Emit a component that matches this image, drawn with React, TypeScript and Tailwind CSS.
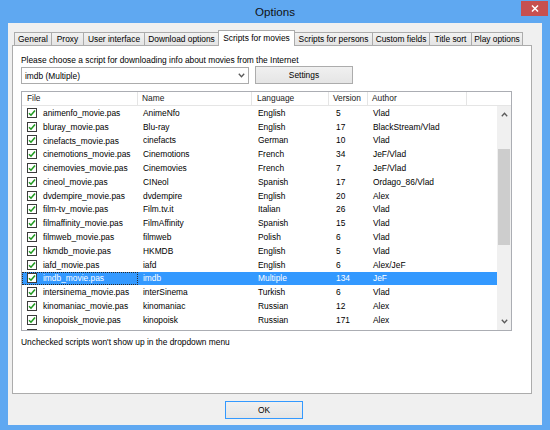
import React from "react";

const tabs: [string, number][] = [
  ["General", 38],
  ["Proxy", 33],
  ["User interface", 62],
  ["Download options", 75],
  ["Scripts for movies", 77],
  ["Scripts for persons", 79],
  ["Custom fields", 58],
  ["Title sort", 43],
  ["Play options", 52],
];

const rows: string[][] = [
  ["animenfo_movie.pas", "AnimeNfo", "English", "5", "Vlad"],
  ["bluray_movie.pas", "Blu-ray", "English", "17", "BlackStream/Vlad"],
  ["cinefacts_movie.pas", "cinefacts", "German", "10", "Vlad"],
  ["cinemotions_movie.pas", "Cinemotions", "French", "34", "JeF/Vlad"],
  ["cinemovies_movie.pas", "Cinemovies", "French", "7", "JeF/Vlad"],
  ["cineol_movie.pas", "CINeol", "Spanish", "17", "Ordago_86/Vlad"],
  ["dvdempire_movie.pas", "dvdempire", "English", "20", "Alex"],
  ["film-tv_movie.pas", "Film.tv.it", "Italian", "26", "Vlad"],
  ["filmaffinity_movie.pas", "FilmAffinity", "Spanish", "15", "Vlad"],
  ["filmweb_movie.pas", "filmweb", "Polish", "6", "Vlad"],
  ["hkmdb_movie.pas", "HKMDB", "English", "5", "Vlad"],
  ["iafd_movie.pas", "iafd", "English", "6", "Alex/JeF"],
  ["imdb_movie.pas", "imdb", "Multiple", "134", "JeF"],
  ["intersinema_movie.pas", "interSinema", "Turkish", "6", "Vlad"],
  ["kinomaniac_movie.pas", "kinomaniac", "Russian", "12", "Alex"],
  ["kinopoisk_movie.pas", "kinopoisk", "Russian", "171", "Alex"],
  ["", "", "", "", ""],
];

const Check = () => (
  <span className="w-[10px] h-[10px] border border-[#3c3c3c] bg-white flex items-center justify-center shrink-0">
    <svg width="8" height="8" viewBox="0 0 8 8">
      <path d="M1 4.2 L3 6.2 L7 1.6" stroke="#1f9a1f" strokeWidth="1.6" fill="none" />
    </svg>
  </span>
);

const Chevron = ({ up }: { up?: boolean }) => (
  <svg width="7" height="5" viewBox="0 0 7 5">
    <path
      d={up ? "M0.8 4.2 L3.5 1.2 L6.2 4.2" : "M0.8 0.8 L3.5 3.8 L6.2 0.8"}
      stroke="#5a5a5a"
      strokeWidth="1.3"
      fill="none"
    />
  </svg>
);

export default function App() {
  const selected = 12;

  return (
    <div className="w-[550px] h-[430px] bg-[#5fa8f1] flex flex-col relative font-['Liberation_Sans',Arial,sans-serif] text-[8.4px] leading-[12px] text-black overflow-hidden">
      {/* title bar */}
      <div className="h-[23px] flex items-center justify-center text-[11.6px] text-[#111]">Options</div>
      <div className="absolute right-[2px] top-[1px] w-[27px] h-[15px] bg-[#c75050] flex items-center justify-center">
        <svg width="8" height="7" viewBox="0 0 8 7">
          <path d="M1 0.5 L7 6.5 M7 0.5 L1 6.5" stroke="#fff" strokeWidth="1.5" />
        </svg>
      </div>

      <div className="mx-[8px] h-[402px] bg-[#f0f0f0] pl-[4px] pt-[7px] flex flex-col">
        {/* tabs */}
        <div className="h-[15px] ml-[2px] flex items-end">
          {tabs.map(([label, w]) => {
            const active = label === "Scripts for movies";
            return (
              <div
                key={label}
                style={{ width: w }}
                className={
                  active
                    ? "h-[16px] -mb-px mr-[-1px] relative z-10 bg-white border border-b-0 border-[#acacac] flex items-start pt-[1px] justify-center whitespace-nowrap"
                    : "h-[13px] mr-[-1px] bg-gradient-to-b from-[#f2f2f2] to-[#e4e4e4] border border-b-0 border-[#acacac] flex items-center justify-center whitespace-nowrap"
                }
              >
                {label}
              </div>
            );
          })}
        </div>

        {/* panel */}
        <div className="w-[520px] h-[349px] bg-white border border-[#acacac] pl-[8px] pt-[8px] flex flex-col">
          <div>Please choose a script for downloading info about movies from the Internet</div>
          <div className="flex items-start">
            <div className="mt-[1px] w-[228px] h-[17px] border border-[#acacac] bg-white flex items-center justify-between pl-[3px] pr-[3px]">
              <span>imdb (Multiple)</span>
              <Chevron />
            </div>
            <button className="ml-[6px] w-[98px] h-[18px] border border-[#acacac] bg-gradient-to-b from-[#f0f0f0] to-[#e5e5e5] flex items-center justify-center">
              Settings
            </button>
          </div>

          {/* list view */}
          <div className="mt-[7px] w-[491px] h-[240px] border border-[#abadb3] flex flex-col">
            <div className="h-[14px] border-b border-[#e5e5e5] flex text-[#1a1a1a]">
              <div className="w-[116px] border-r border-[#e5e5e5] pl-[5px]">File</div>
              <div className="w-[114px] border-r border-[#e5e5e5] pl-[4px]">Name</div>
              <div className="w-[77px] border-r border-[#e5e5e5] pl-[5px]">Language</div>
              <div className="w-[39px] border-r border-[#e5e5e5] pl-[4px]">Version</div>
              <div className="w-[99px] border-r border-[#e5e5e5] pl-[4px]">Author</div>
              <div className="flex-1" />
            </div>
            <div className="flex h-[224px]">
              <div className="w-[475px] overflow-hidden">
                {rows.map((r, i) => {
                  const sel = i === selected;
                  return (
                    <div
                      key={i}
                      className={`h-[13.8px] flex items-center whitespace-nowrap ${sel ? "bg-[#3399ff] text-white" : ""}`}
                    >
                      <div
                        className={`w-[116px] h-full flex items-center pl-[4px] gap-[6px] border ${sel ? "border-dotted border-[#2a2a2a]" : "border-transparent"}`}
                      >
                        <Check />
                        <span>{r[0]}</span>
                      </div>
                      <div className="w-[114px] pl-[5px]">{r[1]}</div>
                      <div className="w-[77px] pl-[6px]">{r[2]}</div>
                      <div className="w-[39px] pl-[7px]">{r[3]}</div>
                      <div className="w-[99px] pl-[5px]">{r[4]}</div>
                    </div>
                  );
                })}
              </div>
              {/* scrollbar */}
              <div className="w-[14px] bg-[#f0f0f0] flex flex-col">
                <div className="h-[17px] flex items-center justify-center">
                  <Chevron up />
                </div>
                <div className="mt-[26px] mx-[1px] h-[96px] bg-[#cdcdcd]" />
                <div className="flex-1" />
                <div className="h-[17px] flex items-center justify-center">
                  <Chevron />
                </div>
              </div>
            </div>
          </div>

          <div className="mt-[5px]">Unchecked scripts won't show up in the dropdown menu</div>
        </div>

        <button className="mt-[7px] ml-[213px] w-[78px] h-[18px] border border-[#3399ff] bg-gradient-to-b from-[#f0f0f0] to-[#e5e5e5] flex items-center justify-center">
          OK
        </button>
      </div>
    </div>
  );
}
